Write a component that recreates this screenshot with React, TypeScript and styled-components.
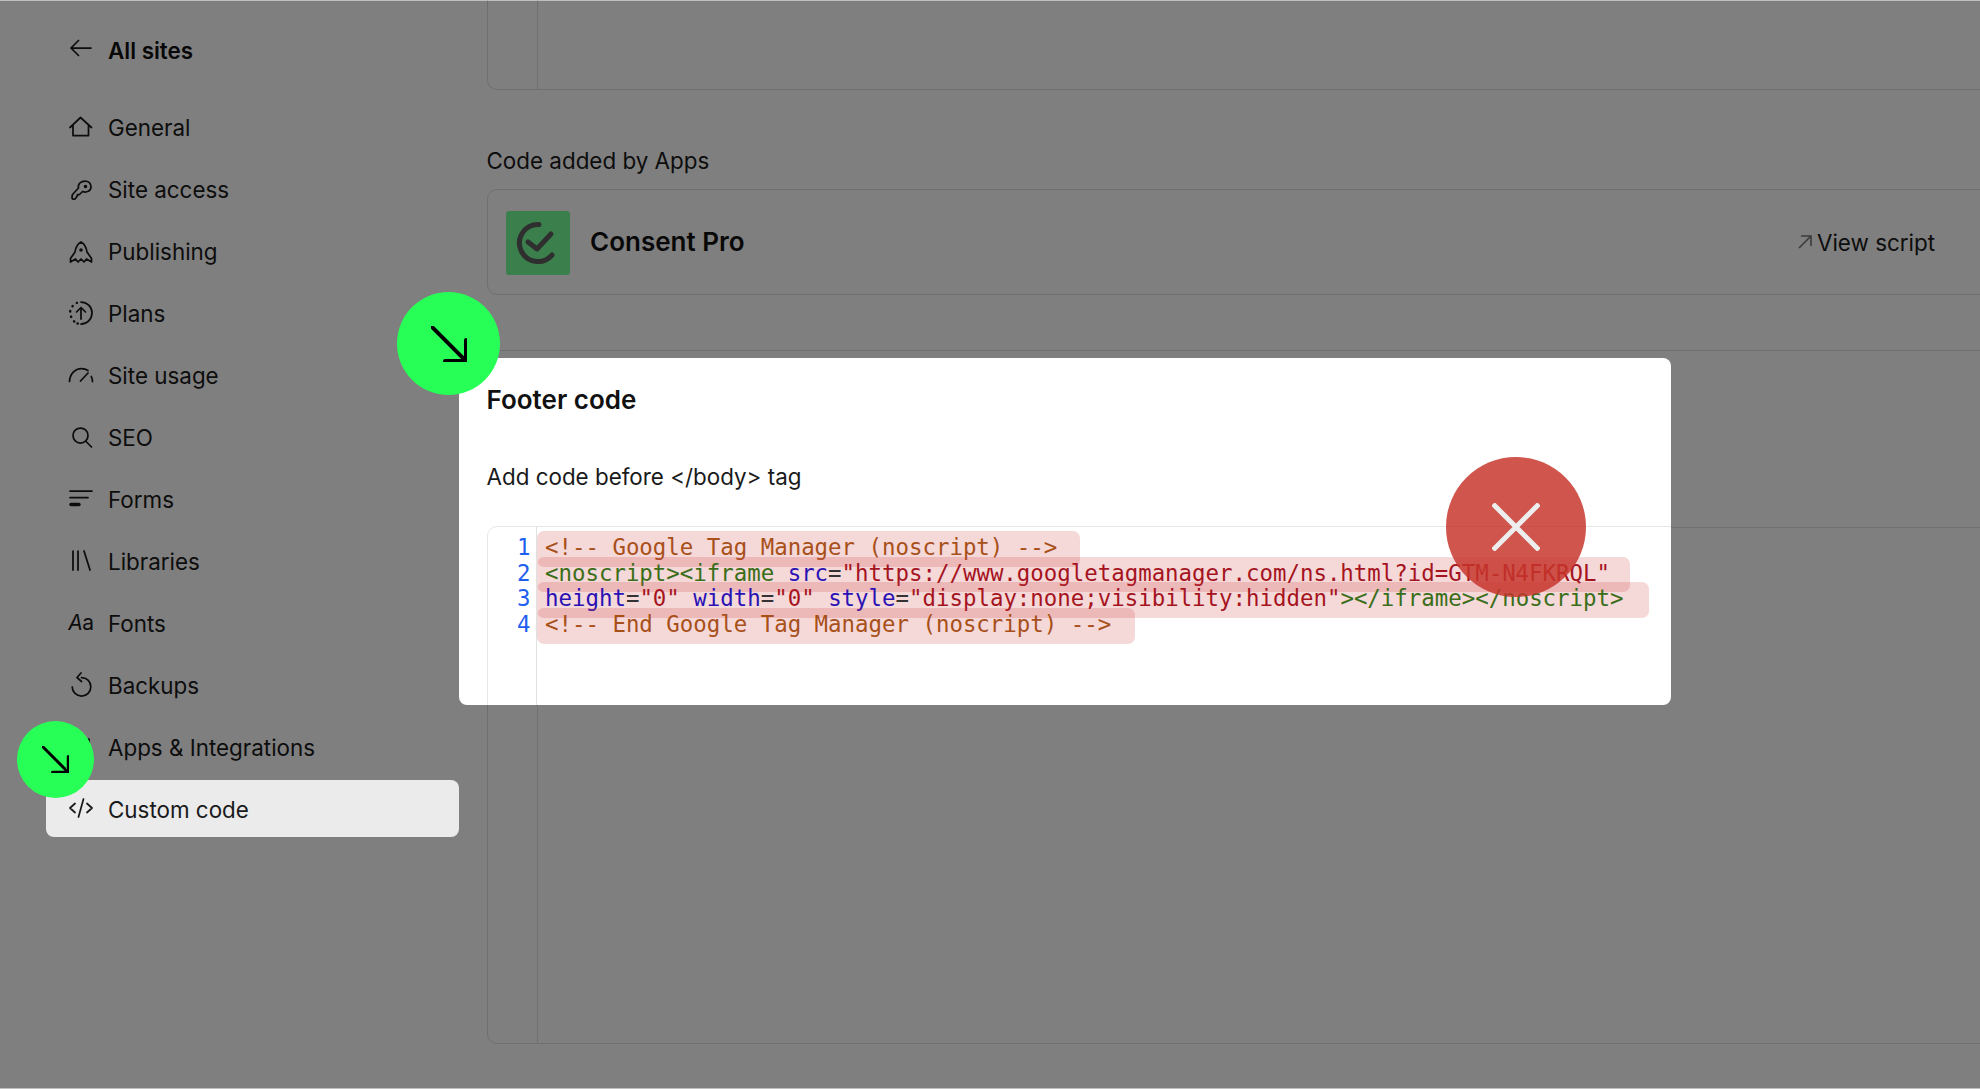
import React from "react";
import styled, { createGlobalStyle } from "styled-components";

const Global = createGlobalStyle`
  html, body { margin: 0; padding: 0; background: #fff; }
  body { font-family: Inter, "Liberation Sans", sans-serif; color: #111; overflow: hidden; }
  #root { width: 1980px; height: 1089px; }
`;

const Page = styled.div`
  position: relative;
  width: 1980px;
  height: 1089px;
  overflow: hidden;
  display: flex;
  background: #fff;
`;

const Sidebar = styled.nav`
  width: 413px;
  margin-left: 46px;
  flex: none;
  display: flex;
  flex-direction: column;
  padding-top: 19px;
`;

const BackRow = styled.div`
  display: flex;
  align-items: center;
  gap: 14px;
  height: 62px;
  margin-bottom: 15px;
  padding: 1px 0 0 22px;
  box-sizing: border-box;
  font-size: 22.4px;
  font-weight: 600;
  color: #111;
`;

const NavRow = styled.div<{ $active?: boolean }>`
  display: flex;
  align-items: center;
  gap: 14px;
  box-sizing: border-box;
  height: ${(p) => (p.$active ? "57px" : "62px")};
  margin: ${(p) => (p.$active ? "2px 0 3px" : "0")};
  padding: 1px 0 0 22px;
  border-radius: 8px;
  font-size: 22.4px;
  color: #1a1a1a;
  background: ${(p) => (p.$active ? "#ebebeb" : "transparent")};
  ${(p) => (p.$active ? "position: relative; z-index: 3;" : "")}
`;

const IconSlot = styled.svg`
  width: 26px;
  height: 26px;
  flex: none;
  margin-top: -2px;
  fill: none;
  stroke: #1a1a1a;
  stroke-width: 1.75;
  stroke-linecap: round;
  stroke-linejoin: round;
`;

const GlyphIcon = styled.span`
  width: 26px;
  flex: none;
  margin-top: -2px;
  font-size: 21px;
  line-height: 26px;
  text-align: center;
  letter-spacing: -0.5px;
  color: #1a1a1a;
  & > i {
    font-style: italic;
  }
`;

const Main = styled.main`
  flex: 1;
  min-width: 0;
  padding-left: 27.5px;
  display: flex;
  flex-direction: column;
`;

const CodeFrame = styled.div<{ $h: number }>`
  position: relative;
  height: ${(p) => p.$h}px;
  width: 1600px;
  flex: none;
  border: 1.5px solid #dedede;
  border-top: none;
  border-radius: 0 0 10px 10px;
  box-sizing: border-box;
  &::before {
    content: "";
    position: absolute;
    top: 0;
    bottom: 0;
    left: 49px;
    width: 1.5px;
    background: #dedede;
  }
`;

const SectionLabel = styled.div`
  font-size: 22.4px;
  line-height: 30px;
  color: #1a1a1a;
  margin: 56px 0 13px;
`;

const AppCard = styled.div`
  flex: none;
  width: 1600px;
  height: 106px;
  box-sizing: border-box;
  border: 1.5px solid #dedede;
  border-radius: 10px;
  display: flex;
  align-items: center;
  padding-left: 18.5px;
`;

const AppRow = styled.div`
  display: flex;
  align-items: center;
  gap: 20px;
  width: 1429px;
`;

const AppLogo = styled.svg`
  width: 64px;
  height: 64px;
  flex: none;
  margin-top: 2px;
`;

const AppName = styled.div`
  font-size: 26px;
  font-weight: 600;
  color: #111;
  flex: 1;
  margin-top: -2px;
`;

const ViewScript = styled.div`
  display: flex;
  align-items: center;
  gap: 4px;
  font-size: 22.4px;
  color: #1a1a1a;
`;

const HiddenCard = styled.div`
  flex: none;
  width: 1600px;
  height: 177px;
  margin-top: 55px;
  box-sizing: border-box;
  border-top: 1.5px solid #dedede;
  border-left: 1.5px solid #dedede;
  border-top-left-radius: 10px;
`;

const EditorFrame = styled.div`
  position: relative;
  flex: none;
  width: 1600px;
  height: 517px;
  box-sizing: border-box;
  border: 1.5px solid #dedede;
  border-radius: 10px;
  &::before {
    content: "";
    position: absolute;
    top: 0;
    bottom: 0;
    left: 49px;
    width: 1.5px;
    background: #dedede;
  }
`;

const Overlay = styled.div`
  position: absolute;
  inset: 0;
  z-index: 2;
  box-sizing: border-box;
  background: rgba(0, 0, 0, 0.5);
  border-top: 1px solid rgba(0, 0, 0, 0.25);
  border-bottom: 1px solid rgba(0, 0, 0, 0.25);
  background-clip: padding-box;
`;

const Modal = styled.section`
  position: absolute;
  left: 459px;
  top: 358px;
  width: 1212px;
  height: 347px;
  z-index: 3;
  box-sizing: border-box;
  background: #fff;
  border-radius: 8px;
  overflow: hidden;
  padding-left: 27.5px;
`;

const ModalTitle = styled.h2`
  margin: 0;
  padding-top: 27px;
  font-size: 26px;
  line-height: 30px;
  font-weight: 600;
  color: #111;
`;

const ModalDesc = styled.p`
  margin: 47px 0 0;
  font-size: 22.4px;
  line-height: 30px;
  color: #1a1a1a;
`;

const Editor = styled.div`
  margin-top: 34px;
  width: 1600px;
  height: 300px;
  box-sizing: border-box;
  border: 1.5px solid #e6e6e6;
  border-radius: 10px 0 0 0;
  display: flex;
`;

const Gutter = styled.div`
  width: 49px;
  flex: none;
  box-sizing: border-box;
  border-right: 1.5px solid #e0e0e0;
  padding: 8px 5px 0 0;
  text-align: right;
  font-family: "DejaVu Sans Mono", monospace;
  font-size: 22.4px;
  line-height: 25.7px;
  color: #1f5ff0;
`;

const CodeBody = styled.div`
  flex: 1;
  display: flex;
  flex-direction: column;
  padding-top: 8px;
  font-family: "DejaVu Sans Mono", monospace;
  font-size: 22.4px;
  line-height: 25.7px;
  white-space: pre;
  color: #333;
`;

const CodeLine = styled.div<{ $pr: number }>`
  width: fit-content;
  margin: -4px 0 -6px;
  padding: 4px ${(p) => p.$pr}px 6px 8.5px;
  height: 25.7px;
  background: rgba(205, 60, 60, 0.2);
  border-radius: 7px;
`;

const Tok = styled.span<{ $k: "c" | "t" | "a" | "s" }>`
  color: ${(p) => ({ c: "#a8501a", t: "#3a6e18", a: "#2a12b4", s: "#a5141e" }[p.$k])};
`;

const GreenDot = styled.div<{ $size: number; $x: number; $y: number }>`
  position: absolute;
  left: ${(p) => p.$x}px;
  top: ${(p) => p.$y}px;
  width: ${(p) => p.$size}px;
  height: ${(p) => p.$size}px;
  border-radius: 50%;
  background: #27ff57;
  z-index: 5;
  display: flex;
  align-items: center;
  justify-content: center;
`;

const RedDot = styled.div`
  position: absolute;
  left: 1446px;
  top: 457px;
  width: 140px;
  height: 140px;
  border-radius: 50%;
  background: rgba(198, 52, 43, 0.84);
  z-index: 5;
  display: flex;
  align-items: center;
  justify-content: center;
`;

const Ic = ({ children }: { children: React.ReactNode }) => (
  <IconSlot viewBox="0 0 26 26">{children}</IconSlot>
);

const nav: { label: string; icon: React.ReactNode }[] = [
  {
    label: "General",
    icon: <path d="M2 13.5 L12.5 3.5 L23.5 13.5 M5 11 V21.5 H20.5 V11" />,
  },
  {
    label: "Site access",
    icon: (
      <>
        <path d="M10.5 12 C9.5 8 13 5 17 5 C20.5 5 23 7.5 23 11 C23 15 18.5 17 14.5 15.5 L11.5 18.5 H9.5 L9 20.5 L7 23 H5 C4 23 4 22 4 21 L4.5 18.5 Z" />
        <circle cx="17.5" cy="10.5" r="0.9" fill="#1a1a1a" />
      </>
    ),
  },
  {
    label: "Publishing",
    icon: (
      <>
        <path d="M13 4 C9.5 6 7.5 10 7 14 L2.5 20.5 V24 L7.5 21 L10 24 L13 21 L16 24 L18.5 21 L23.5 24 V20.5 L19 14 C18.5 10 16.5 6 13 4 Z" />
        <circle cx="13" cy="12" r="0.9" fill="#1a1a1a" />
      </>
    ),
  },
  {
    label: "Plans",
    icon: (
      <>
        <path d="M13 2 A11 11 0 1 1 13 24" />
        <path d="M9 2.8 L8.8 3 M4.7 6 L4.5 6.3 M2.2 11 V11.5 M3 16.5 L3.2 17 M6 21.3 L6.3 21.5 M9.5 23.5 H9.8" strokeWidth="2.4" />
        <path d="M13 19 V7.5 M8.5 12 L13 7.5 L17.5 12" />
      </>
    ),
  },
  {
    label: "Site usage",
    icon: (
      <path d="M1.5 19.5 C2 12 7 6.5 13.5 6.5 C16 6.5 18 7 20 8.5 M24.5 19.5 C24.5 17.5 24 16 23.3 14.5 M12.5 19 L20 11" />
    ),
  },
  {
    label: "SEO",
    icon: (
      <>
        <circle cx="12.5" cy="11.5" r="7.5" />
        <path d="M18 17.5 L23.5 23" />
      </>
    ),
  },
  {
    label: "Forms",
    icon: (
      <>
        <path d="M2 5 H24 M2 11.5 H20" />
        <path d="M3 18.5 H11" strokeWidth="3.4" />
      </>
    ),
  },
  {
    label: "Libraries",
    icon: <path d="M5 3 V22 M10 3 V22 M16 3 L22 22" />,
  },
  {
    label: "Fonts",
    icon: null,
  },
  {
    label: "Backups",
    icon: <path d="M13.5 5.5 A9.3 9.3 0 1 1 4.2 15 M13 1 L9 5.5 L13.5 9.5" />,
  },
  {
    label: "Apps & Integrations",
    icon: <path d="M5 5 H21 V21 H5 Z" />,
  },
];

function Arrow({ size, w }: { size: number; w: number }) {
  return (
    <svg width={size} height={size} viewBox="0 0 36 36" fill="none" stroke="#000" strokeWidth={w} strokeLinecap="round" strokeLinejoin="round">
      <path d="M1 1 L35 35 M14 35 H35 V14" />
    </svg>
  );
}

export default function App() {
  return (
    <Page>
      <Global />
      <Sidebar>
        <BackRow>
          <Ic>
            <path d="M23 11 H3 M10.5 3.5 L3 11 L10.5 18.5" />
          </Ic>
          All sites
        </BackRow>
        {nav.map((n) => (
          <NavRow key={n.label}>
            {n.icon ? (
              <Ic>{n.icon}</Ic>
            ) : (
              <GlyphIcon>
                <i>A</i>a
              </GlyphIcon>
            )}
            {n.label}
          </NavRow>
        ))}
        <NavRow $active>
          <Ic>
            <path d="M7 8.5 L2 13 L7 17.5 M19 8.5 L24 13 L19 17.5 M15.5 4 L10.5 22" />
          </Ic>
          Custom code
        </NavRow>
      </Sidebar>
      <Main>
        <CodeFrame $h={90} />
        <SectionLabel>Code added by Apps</SectionLabel>
        <AppCard>
          <AppRow>
            <AppLogo viewBox="0 0 64 64">
              <rect width="64" height="64" rx="3" fill="#76ff98" />
              <path d="M33 13.5 A18.5 18.5 0 1 0 46 44" fill="none" stroke="#5e5e5e" strokeWidth="5" strokeLinecap="round" />
              <path d="M22 31 L31 38 L45 23" fill="none" stroke="#5e5e5e" strokeWidth="5" strokeLinecap="round" strokeLinejoin="round" />
            </AppLogo>
            <AppName>Consent Pro</AppName>
            <ViewScript>
              <svg width="16" height="16" viewBox="0 0 16 16" fill="none" stroke="#777" strokeWidth="1.6">
                <path d="M2 14 L14 2 M4 2 H14 V12" />
              </svg>
              View script
            </ViewScript>
          </AppRow>
        </AppCard>
        <HiddenCard />
        <EditorFrame />
      </Main>
      <Overlay />
      <Modal>
        <ModalTitle>Footer code</ModalTitle>
        <ModalDesc>{"Add code before </body> tag"}</ModalDesc>
        <Editor>
          <Gutter>
            <div>1</div>
            <div>2</div>
            <div>3</div>
            <div>4</div>
          </Gutter>
          <CodeBody>
            <CodeLine $pr={23}>
              <Tok $k="c">{"<!-- Google Tag Manager (noscript) -->"}</Tok>
            </CodeLine>
            <CodeLine $pr={20}>
              <Tok $k="t">{"<noscript><iframe "}</Tok>
              <Tok $k="a">src</Tok>=
              <Tok $k="s">{'"https://www.googletagmanager.com/ns.html?id=GTM-N4FKRQL"'}</Tok>
            </CodeLine>
            <CodeLine $pr={25}>
              <Tok $k="a">height</Tok>=<Tok $k="s">{'"0"'}</Tok> <Tok $k="a">width</Tok>=
              <Tok $k="s">{'"0"'}</Tok> <Tok $k="a">style</Tok>=
              <Tok $k="s">{'"display:none;visibility:hidden"'}</Tok>
              <Tok $k="t">{"></iframe></noscript>"}</Tok>
            </CodeLine>
            <CodeLine $pr={24}>
              <Tok $k="c">{"<!-- End Google Tag Manager (noscript) -->"}</Tok>
            </CodeLine>
          </CodeBody>
        </Editor>
      </Modal>
      <GreenDot $size={103} $x={397} $y={292}>
        <Arrow size={36} w={4} />
      </GreenDot>
      <GreenDot $size={77} $x={17} $y={721}>
        <Arrow size={27} w={4} />
      </GreenDot>
      <RedDot>
        <svg width="48" height="48" viewBox="0 0 48 48" fill="none" stroke="#eee" strokeWidth="5">
          <path d="M1 1 L47 47 M47 1 L1 47" />
        </svg>
      </RedDot>
    </Page>
  );
}
